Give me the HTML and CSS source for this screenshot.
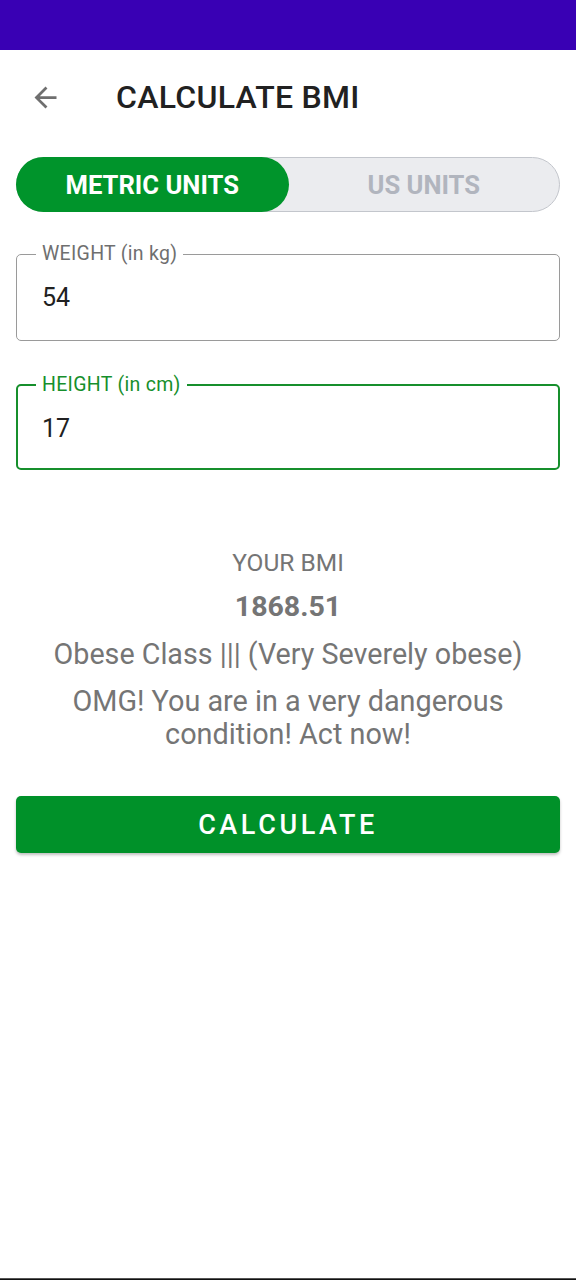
FILE: index.html
```html
<!DOCTYPE html>
<html lang="en">
<head>
<meta charset="utf-8">
<title>Calculate BMI</title>
<link rel="stylesheet" href="styles.css">
</head>
<body>
<div class="screen">
  <div class="status-bar"></div>
  <header class="toolbar">
    <button class="back" aria-label="Back">
      <svg width="33" height="33" viewBox="0 0 24 24"><path d="M20 11H7.83l5.59-5.59L12 4l-8 8 8 8 1.41-1.41L7.83 13H20v-2z" fill="#6f6f6f"/></svg>
    </button>
    <h1 class="title">CALCULATE BMI</h1>
  </header>
  <main class="content">
    <div class="toggle">
      <div class="tab active">METRIC UNITS</div>
      <div class="tab">US UNITS</div>
    </div>
    <fieldset class="field">
      <legend>WEIGHT (in kg)</legend>
      <div class="value">54</div>
    </fieldset>
    <fieldset class="field focused">
      <legend>HEIGHT (in cm)</legend>
      <div class="value">17</div>
    </fieldset>
    <section class="result">
      <div class="result-label">YOUR BMI</div>
      <div class="result-value">1868.51</div>
      <div class="result-type">Obese Class ||| (Very Severely obese)</div>
      <div class="result-desc">OMG! You are in a very dangerous condition! Act now!</div>
    </section>
    <button class="calc">CALCULATE</button>
  </main>
  <div class="nav-edge"></div>
</div>
</body>
</html>
```
FILE: styles.css
```css
* { box-sizing: border-box; }
html, body { margin: 0; padding: 0; background: #fff; }
body { font-family: Roboto, "Noto Sans", Arial, sans-serif; }
.screen { display: flex; flex-direction: column; min-height: 1280px; }
.status-bar { height: 50px; background: #3900b4; }
.toolbar { height: 94px; display: flex; align-items: center; padding-left: 29px; }
.back { background: none; border: 0; padding: 0; width: 33px; height: 33px; display: flex; align-items: center; justify-content: center; }
.title { margin: 0 0 0 54px; font-size: 32px; font-weight: 500; color: #212121; letter-spacing: 0.3px; }
.content { flex: 1; padding: 0 16px; display: flex; flex-direction: column; }
.toggle { margin-top: 13px; height: 55px; display: flex; background: #ebecef; border: 1px solid #c3c6cc; border-radius: 28px; }
.tab { flex: 1; display: flex; align-items: center; justify-content: center; font-size: 25.6px; font-weight: 700; color: #b1b5be; border-radius: 28px; margin: -1px; }
.tab.active { background: #00942b; color: #fff; margin-right: 0; }
.field { margin: 33px 0 0; padding: 0; border: 1px solid #9a9a9a; border-radius: 5px; min-width: 0; }
.field legend { margin-left: 19px; padding: 0 6px; font-size: 19.5px; line-height: 18px; color: #6f6f6f; letter-spacing: 0.3px; }
.field .value { height: 68px; padding: 0 0 0 25px; display: flex; align-items: center; font-size: 25px; color: #212121; margin-bottom: 9px; }
.field.focused { margin-top: 35px; border: 2px solid #168f2c; }
.field.focused legend { color: #168f2c; margin-left: 18px; }
.field.focused .value { padding-left: 24px; margin-bottom: 6px; }
.result { margin-top: 78px; text-align: center; color: #757575; }
.result-label { font-size: 24.5px; line-height: 30px; }
.result-value { margin-top: 14px; font-size: 28.5px; line-height: 30px; font-weight: 700; }
.result-type { margin-top: 16px; font-size: 28.7px; line-height: 33px; }
.result-desc { margin: 14px auto 0; font-size: 28.8px; line-height: 33px; max-width: 500px; }
.calc { margin-top: 45px; height: 57px; border: 0; border-radius: 5px; background: #009129; color: #fff; font-family: inherit; font-size: 27px; font-weight: 500; letter-spacing: 3.6px; box-shadow: 0 2px 3px rgba(0,0,0,0.25); }
.nav-edge { height: 2px; background: #111; border-top: 1px solid #555; }
```
